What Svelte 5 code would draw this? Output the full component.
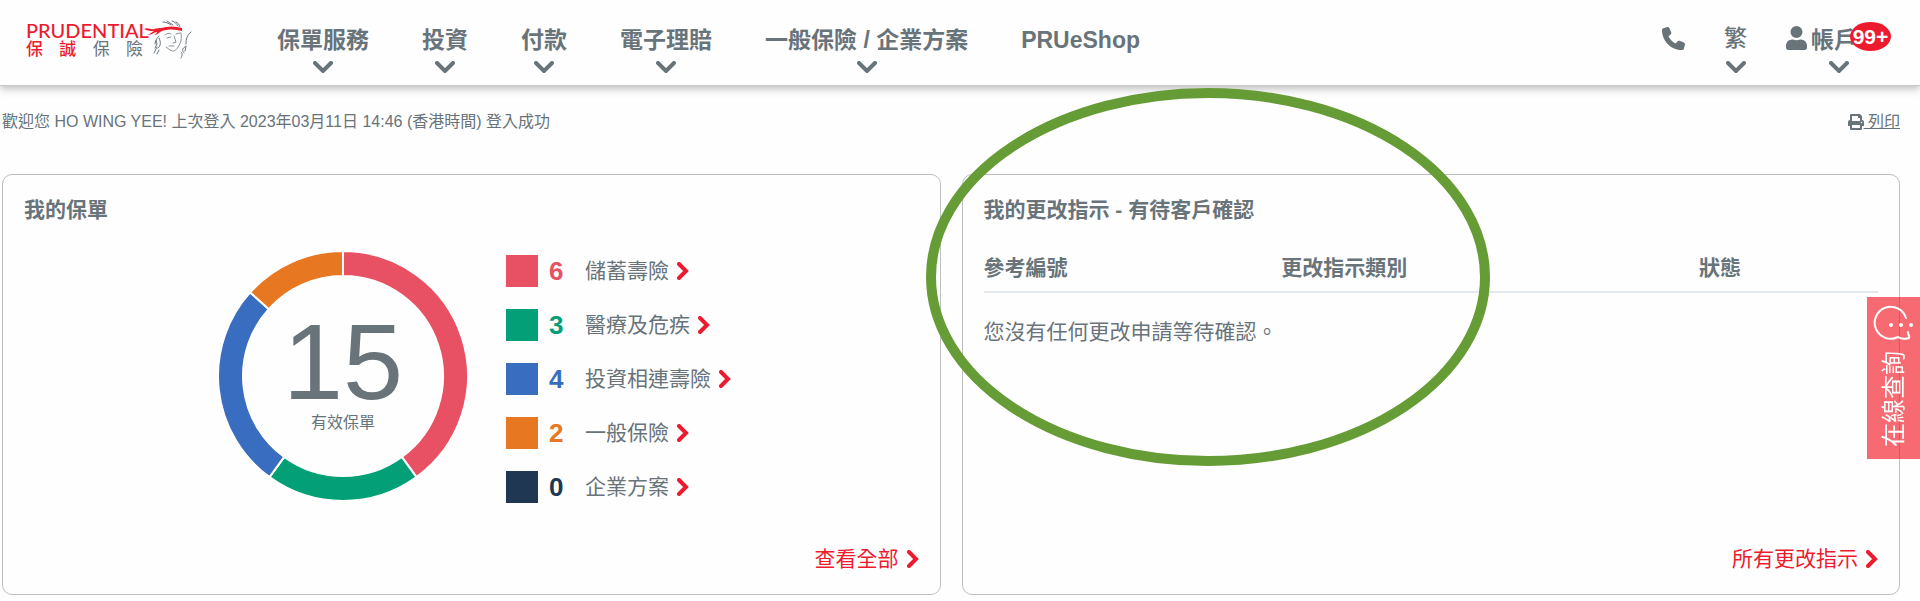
<script>
  const menu = [
    { label: '保單服務', sub: true },
    { label: '投資', sub: true },
    { label: '付款', sub: true },
    { label: '電子理賠', sub: true },
    { label: '一般保險 / 企業方案', sub: true },
    { label: 'PRUeShop', sub: false }
  ];

  const policies = [
    { count: 6, label: '儲蓄壽險', color: '#e85164' },
    { count: 3, label: '醫療及危疾', color: '#03a078' },
    { count: 4, label: '投資相連壽險', color: '#396dc0' },
    { count: 2, label: '一般保險', color: '#e87722' },
    { count: 0, label: '企業方案', color: '#203754' }
  ];

  const total = policies.reduce((sum, p) => sum + p.count, 0);
  const point = (r, share) => {
    const a = share * 2 * Math.PI;
    return `${(125 + r * Math.sin(a)).toFixed(2)} ${(125 - r * Math.cos(a)).toFixed(2)}`;
  };

  let passed = 0;
  const slices = policies
    .filter((p) => p.count > 0)
    .map((p) => {
      const from = passed / total;
      passed += p.count;
      const to = passed / total;
      const large = to - from > 0.5 ? 1 : 0;
      return {
        color: p.color,
        d: `M${point(125, from)}A125 125 0 ${large} 1 ${point(125, to)}L${point(100, to)}A100 100 0 ${large} 0 ${point(100, from)}Z`
      };
    });
</script>

{#snippet down()}
  <svg class="down" viewBox="0 0 20 12" aria-hidden="true"><path d="M2 2l8 8 8-8" /></svg>
{/snippet}

{#snippet next()}
  <svg class="next" viewBox="0 0 12 18" aria-hidden="true"><path d="M2 2l7 7-7 7" /></svg>
{/snippet}

<header class="bar">
  <a class="logo" href="#home">
    <span class="words">
      <span class="latin">PRUDENTIAL</span>
      <span class="han"><b>保</b><b>誠</b><i>保</i><i>險</i></span>
    </span>
    <svg class="face" viewBox="0 0 50 40" aria-hidden="true">
      <path class="thick" d="M20 2c3 0 5 1 8 3M24 1l6 4M29 1c3 1 5 3 6 5M33 2c2 1 4 3 4 5" />
      <path d="M22 15c2-2 4-2 6-1M24 18l4-1M33 14l4-1M31 16l2 6-3 1M26 26l5 0M38 13c1 5 0 10-3 14-2 4-5 5-8 3l-4-3" />
      <path class="thick" d="M16 16c-3 2-3 5-2 8l-2 4M13 20l-1 4M16 18c2 4 2 8-1 10M14 27l-3 6M16 30l-2 4M48 12c-4 3-5 7-5 12M42 27c-3 1-3 4-1 6M38 32c2 2 1 4 0 6M43 26l-1 5" />
      <path class="band" d="M1 9c4-2 7 1 10 0s5-1 7-1c7-2 14-2 21 0v3c-7-2-14-2-20 0-3 1-4 4-8 4 2-1 3-2 3-3-3 0-5 3-9 3 3-2 4-3 6-4-3 0-6 0-10-2z" />
    </svg>
  </a>
  <nav class="menu">
    {#each menu as item}
      <a href="#menu">{item.label}{#if item.sub}{@render down()}{/if}</a>
    {/each}
  </nav>
  <div class="tools">
    <a href="#phone" aria-label="Phone">
      <svg class="phone" viewBox="0 0 512 512" aria-hidden="true"><path d="M164.900 24.600c-7.700-18.600-28-28.500-47.400-23.200l-88 24C12.100 30.200 0 46 0 64c0 247.400 200.600 448 448 448 18 0 33.800-12.100 38.600-29.500l24-88c5.300-19.400-4.600-39.700-23.200-47.400l-96-40c-16.300-6.800-35.200-2.100-46.300 11.600L304.700 368C234.300 334.700 177.300 277.700 144 207.300L193.300 167c13.700-11.200 18.400-30 11.600-46.300l-40-96z" /></svg>
    </a>
    <button class="lang" type="button">繁{@render down()}</button>
    <button class="account" type="button">
      <span class="who">
        <svg class="user" viewBox="0 0 448 512" aria-hidden="true"><path d="M224 256a128 128 0 1 0 0-256 128 128 0 1 0 0 256zm-90 32C60 288 0 348 0 422v42c0 26 22 48 48 48h352c26 0 48-22 48-48v-42c0-74-60-134-134-134h-17a174 174 0 0 1-146 0z" /></svg>
        帳戶
        <span class="badge">99+</span>
      </span>
      {@render down()}
    </button>
  </div>
</header>

<main>
  <div class="welcome">
    <p>歡迎您 HO WING YEE! 上次登入 2023年03月11日 14:46 (香港時間) 登入成功</p>
    <a class="print" href="#print"><svg viewBox="0 0 512 512" aria-hidden="true"><path fill-rule="evenodd" d="M448 192V77a32 32 0 0 0-9-22L393 9a32 32 0 0 0-22-9H96a32 32 0 0 0-32 32v160a64 64 0 0 0-64 64v112a16 16 0 0 0 16 16h48v96a32 32 0 0 0 32 32h320a32 32 0 0 0 32-32v-96h48a16 16 0 0 0 16-16V256a64 64 0 0 0-64-64zm-64 256H128v-96h256zm0-224H128V64h192v48a16 16 0 0 0 16 16h48zm48 72a24 24 0 1 1 0-48 24 24 0 0 1 0 48z" /></svg><span>&nbsp;列印</span></a>
  </div>

  <div class="cards">
    <section class="card">
      <h2>我的保單</h2>
      <div class="summary">
        <div class="donut">
          <svg viewBox="0 0 250 250" aria-hidden="true">
            {#each slices as s}
              <path d={s.d} fill={s.color} />
            {/each}
          </svg>
          <div class="total"><strong>{total}</strong><span>有效保單</span></div>
        </div>
        <ul>
          {#each policies as p}
            <li style:color={p.color}>
              <span class="swatch"></span>
              <b>{p.count}</b>
              <a href="#policies">{p.label}{@render next()}</a>
            </li>
          {/each}
        </ul>
      </div>
      <a class="more" href="#all">查看全部{@render next()}</a>
    </section>

    <section class="card">
      <h2>我的更改指示 - 有待客戶確認</h2>
      <table>
        <thead>
          <tr><th>參考編號</th><th>更改指示類別</th><th>狀態</th></tr>
        </thead>
        <tbody>
          <tr><td colspan="3">您沒有任何更改申請等待確認。</td></tr>
        </tbody>
      </table>
      <a class="more" href="#changes">所有更改指示{@render next()}</a>
      <svg class="ring" viewBox="0 0 564 378" aria-hidden="true"><ellipse cx="282" cy="189" rx="277" ry="184" /></svg>
    </section>
  </div>
</main>

<button class="chat" type="button">
  <svg viewBox="0 0 42 36" aria-hidden="true">
    <path d="M33 13A16 16 0 1 0 25 32c3 2 8 2 11 1 1-2-1-3-1-6" />
    <circle cx="18" cy="20" r="2" /><circle cx="28" cy="20" r="2" /><circle cx="38" cy="20" r="2" />
  </svg>
  <span>在線查詢</span>
</button>

<style>
  :global(body) {
    background: #fefefe;
    color: #68737a;
    font-family: "Liberation Sans", "Noto Sans CJK TC", sans-serif;
    font-size: 21px;
    line-height: 32px;
  }
  a { color: inherit; text-decoration: none; }
  button {
    padding: 0;
    border: 0;
    background: none;
    color: inherit;
    font: inherit;
    cursor: pointer;
  }
  svg { display: block; flex: none; }

  .bar {
    display: flex;
    align-items: flex-start;
    box-sizing: border-box;
    height: 86px;
    padding: 20px 29px 0 26px;
    border-bottom: 1px solid #c8c8c8;
    box-shadow: 0 3px 8px rgba(0, 0, 0, 0.25);
    font-size: 23px;
    line-height: 40px;
  }
  .logo { display: flex; width: 251px; }
  .words { width: 117px; }
  .latin {
    display: block;
    color: #ed1b2e;
    font: 500 20px/20px Lato, sans-serif;
  }
  .han {
    display: flex;
    justify-content: space-between;
    font-size: 17px;
    line-height: 20px;
  }
  .han b { color: #ed1b2e; font-weight: 500; }
  .han i { font-style: normal; }
  .face { width: 50px; height: 40px; fill: none; stroke: #87929a; stroke-width: 1; stroke-linecap: round; }
  .face .band { fill: #ed1b2e; stroke: none; }
  .face .thick { stroke: #68737a; }

  .menu { display: flex; gap: 53px; font-weight: 700; }
  .menu a, .tools > * { display: flex; flex-direction: column; align-items: center; }
  .down { width: 20px; height: 12px; margin-top: 1px; }
  .down path, .next path {
    fill: none;
    stroke: currentColor;
    stroke-width: 4;
    stroke-linecap: round;
    stroke-linejoin: miter;
  }
  .tools { display: flex; gap: 39px; margin-left: auto; }
  .phone { width: 23px; height: 23px; margin-top: 7px; fill: currentColor; }
  .lang { line-height: 36px; font-weight: 500; }
  .lang .down { margin-top: 5px; }
  .account { font-weight: 700; }
  .who { position: relative; display: flex; align-items: center; gap: 4px; padding-right: 34px; }
  .user { width: 21px; height: 24px; margin-bottom: 4px; fill: currentColor; }
  .badge {
    position: absolute;
    top: 2px;
    right: 0;
    width: 41px;
    border-radius: 50%;
    background: #ed1b2e;
    color: #fff;
    font-size: 21px;
    font-weight: 700;
    line-height: 29px;
  }

  .welcome {
    display: flex;
    justify-content: space-between;
    padding: 20px 20px 0 2px;
    font-size: 16px;
  }
  p { margin: 0; }
  .print { display: flex; align-items: center; }
  .print svg { width: 16px; height: 16px; fill: currentColor; }
  .print span { text-decoration: underline; }

  .cards {
    display: grid;
    grid-template-columns: 1fr 1fr;
    gap: 21px;
    padding: 36px 20px 6px 2px;
  }
  .card {
    position: relative;
    display: flex;
    flex-direction: column;
    padding: 19px 21px;
    border: 1px solid #bdbfc1;
    border-radius: 10px;
  }
  h2 { margin: 0; font-size: 21px; line-height: 32px; }
  .summary {
    display: grid;
    grid-template-columns: 444px 1fr;
    gap: 38px;
    padding-top: 25px;
  }
  .donut { display: grid; justify-items: end; }
  .donut > * { grid-area: 1 / 1; width: 250px; height: 250px; }
  .donut path { stroke: #fff; stroke-width: 2; }
  .total {
    display: flex;
    flex-direction: column;
    align-items: center;
    box-sizing: border-box;
    padding-top: 60px;
  }
  .total strong { font-size: 108px; font-weight: 400; line-height: 102px; }
  .total span { font-size: 16px; line-height: 20px; }
  ul { display: grid; align-content: start; gap: 22px; margin: 0; padding: 4px 0 0; list-style: none; }
  li { display: flex; align-items: center; }
  .swatch { width: 32px; height: 32px; background: currentColor; }
  li b { width: 26px; margin: 0 10px 0 11px; font-size: 26px; }
  li a { display: flex; align-items: center; gap: 8px; color: #68737a; }
  .next { width: 12px; height: 18px; color: #ed1b2e; }
  .more {
    display: flex;
    align-items: center;
    align-self: flex-end;
    gap: 8px;
    margin-top: auto;
    color: #ed1b2e;
  }
  .summary + .more { margin-top: 40px; }

  table { width: 100%; margin-top: 26px; border-collapse: collapse; table-layout: fixed; }
  th { padding: 0 0 7px; border-bottom: 2px solid #e3e8ee; text-align: left; }
  th:first-child { width: 33.3%; }
  th:nth-child(2) { width: 46.7%; }
  td { padding: 23px 0 0; }
  .ring {
    position: absolute;
    top: -87px;
    left: -37px;
    width: 564px;
    height: 378px;
    fill: none;
    stroke: #669c35;
    stroke-width: 10;
    pointer-events: none;
  }

  .chat {
    position: fixed;
    top: 297px;
    right: 0;
    display: flex;
    flex-direction: column;
    align-items: center;
    gap: 10px;
    width: 53px;
    padding: 8px 0 12px;
    background: rgba(242, 22, 34, 0.64);
    color: #fff;
    font-size: 24px;
    line-height: 24px;
  }
  .chat svg { width: 42px; height: 36px; fill: none; stroke: #fff; stroke-width: 2; stroke-linecap: round; }
  .chat circle { fill: #fff; stroke: none; }
  .chat span { writing-mode: vertical-rl; text-orientation: sideways; transform: rotate(180deg); }
</style>
